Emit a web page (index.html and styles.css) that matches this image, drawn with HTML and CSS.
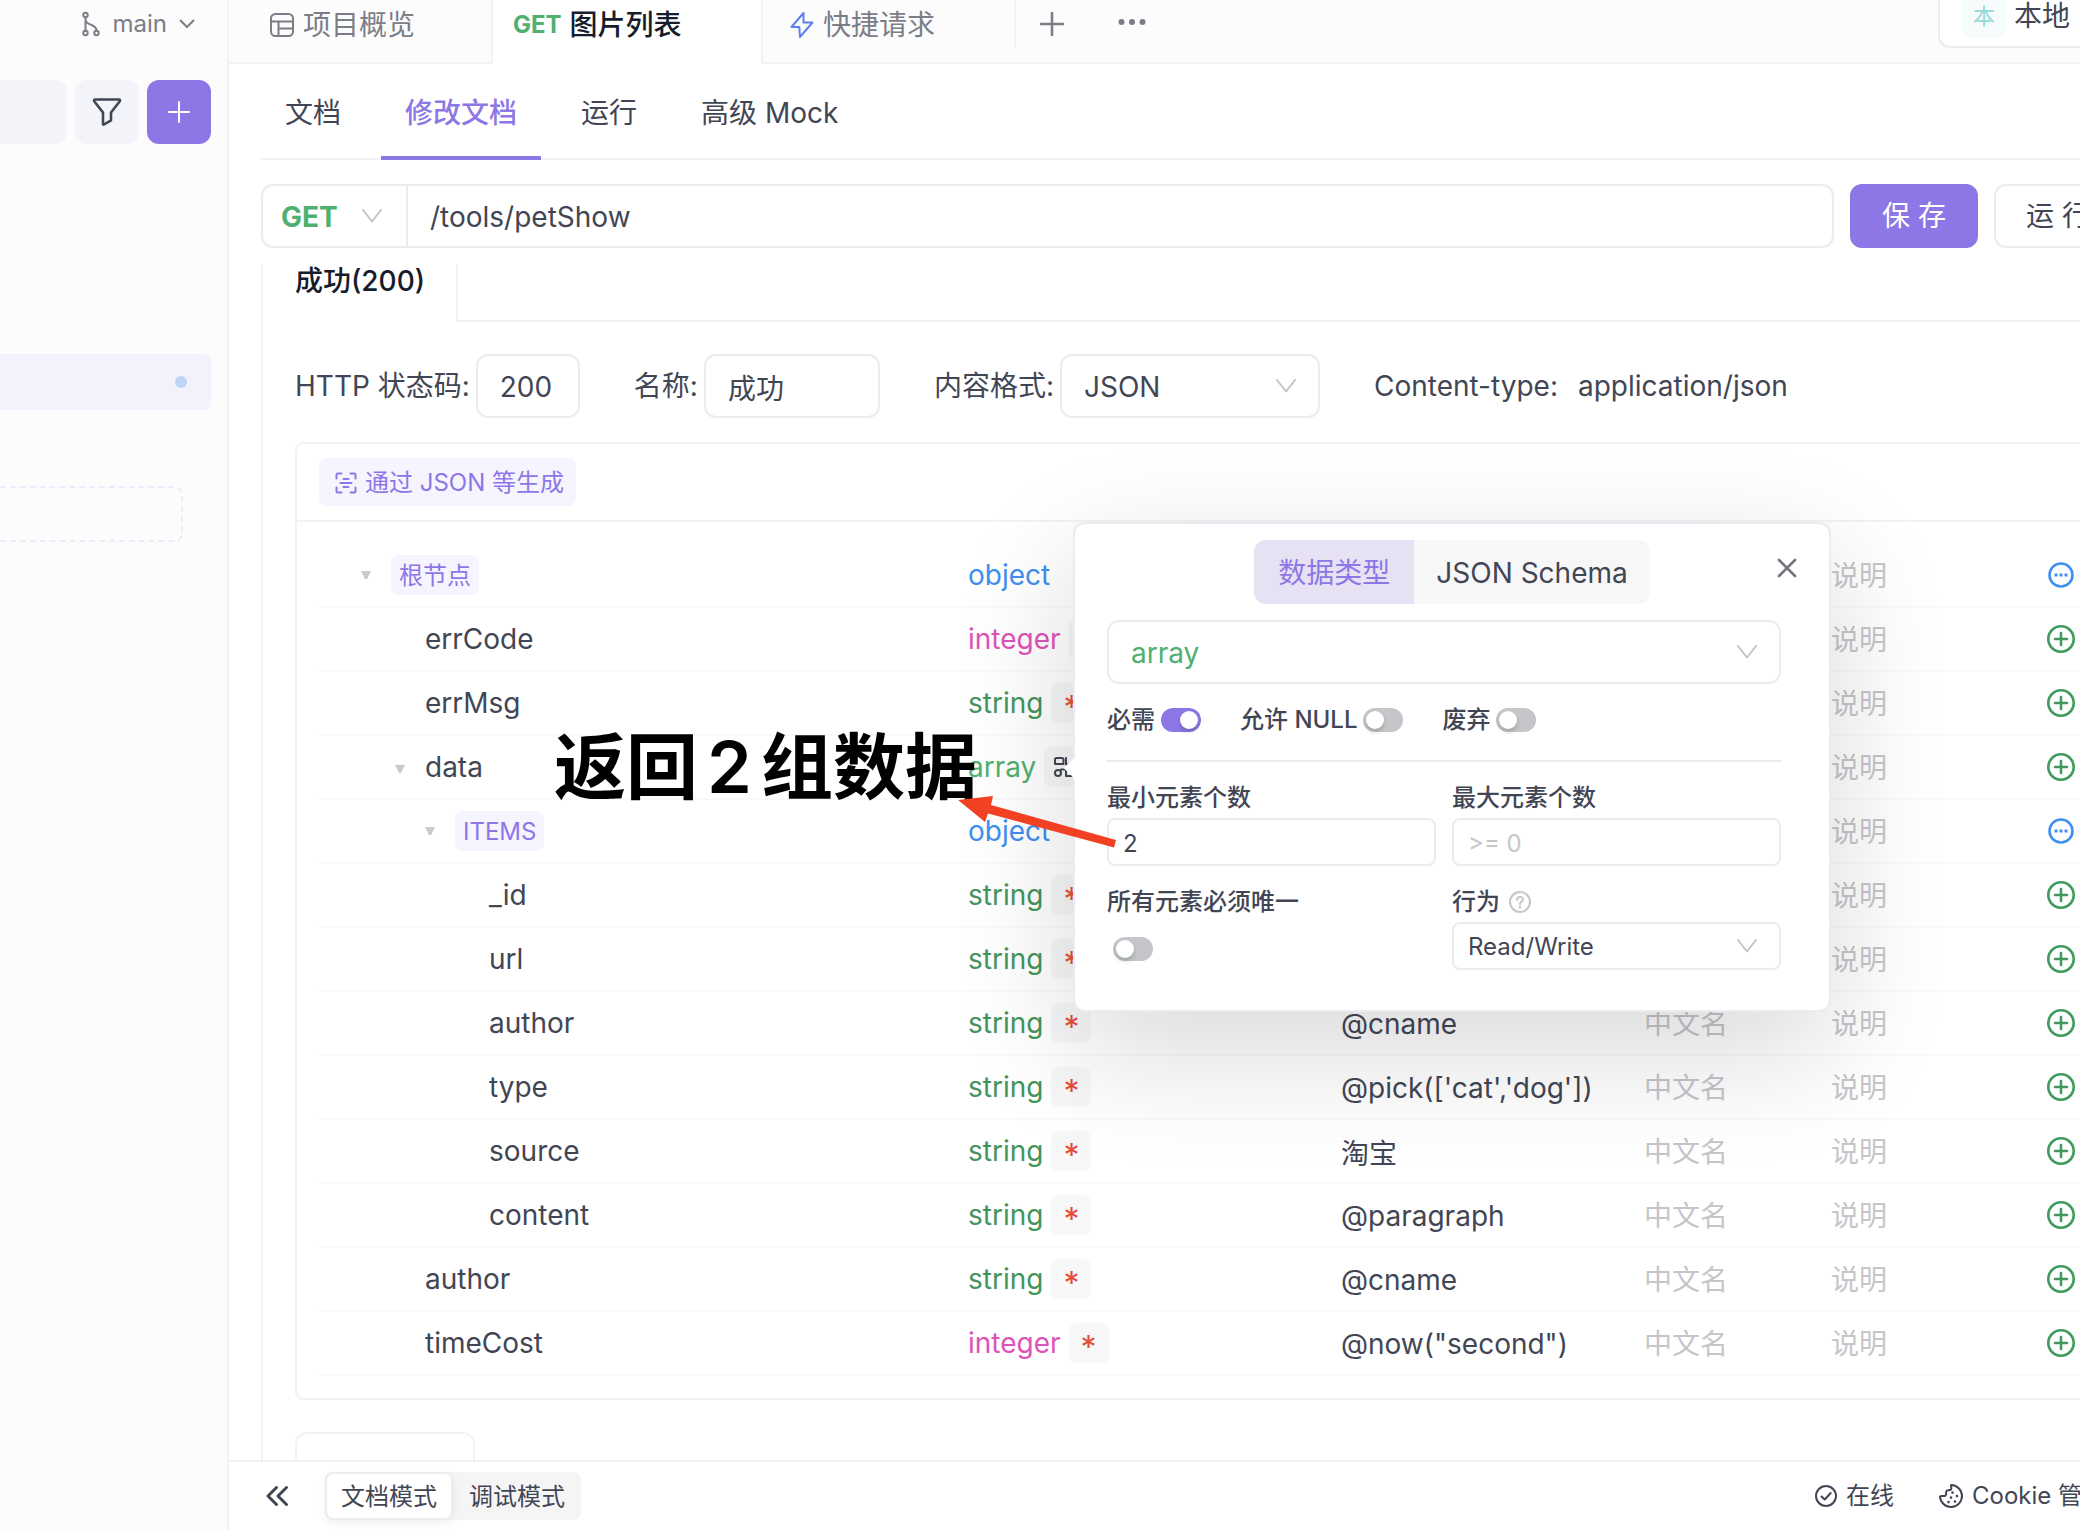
FILE: index.html
```html
<!DOCTYPE html>
<html lang="zh-CN">
<head>
<meta charset="utf-8">
<title>图片列表</title>
<link rel="stylesheet" href="styles.css">
</head>
<body>
<svg class="sprite" aria-hidden="true">
  <symbol id="chevron" viewBox="0 0 20 14"><path d="M1 1l9 11.500 9-11.500"/></symbol>
  <symbol id="add" viewBox="0 0 28 28"><circle cx="14" cy="14" r="12.700"/><path d="M14 8v12M8 14h12"/></symbol>
  <symbol id="more" viewBox="0 0 28 28"><circle cx="14" cy="14" r="11.500"/><path d="M7.500 14h3M12.500 14h3M17.500 14h3" stroke-width="3.200"/></symbol>
  <symbol id="caret" viewBox="0 0 10 10"><path d="M0 1h10L6 9H4z"/></symbol>
</svg>

<aside class="sidebar">
  <button class="branch" type="button">
    <svg class="line" width="20" height="26" viewBox="0 0 20 26"><circle cx="4.500" cy="4" r="2.200"/><circle cx="4.500" cy="22" r="2.200"/><circle cx="15.500" cy="22" r="2.200"/><path d="M4.500 6.500v13M4.500 9.500c1 3 3 3.200 6 4.500 3.500 1.500 5 2.500 5 5.500"/></svg>
    <span>main</span>
    <svg class="line" width="16" height="10" viewBox="0 0 16 10"><path d="M1.500 1.500L8 8l6.500-6.500"/></svg>
  </button>
  <div class="side-tools">
    <input class="side-search" type="text" aria-label="搜索">
    <button class="square" type="button" aria-label="筛选"><svg class="line" width="32" height="32" viewBox="0 0 32 32"><path stroke-width="2.600" d="M3 4.500c0-.6.400-1 1-1h24c.9 0 1.300 1 .8 1.700L20 16.500v7.800L13 28.500c-.5.300-1 0-1-.5V16.500L3.200 5.200z"/></svg></button>
    <button class="square square-primary" type="button" aria-label="新建"><svg class="line" width="24" height="24" viewBox="0 0 24 24"><path d="M12 2v20M2 12h20"/></svg></button>
  </div>
  <div class="side-item"><span class="dot"></span></div>
  <div class="side-drop"></div>
</aside>

<main class="main">
  <header class="tabs">
    <button class="tab tab-overview" type="button">
      <svg class="line" width="26" height="26" viewBox="0 0 26 26"><rect x="2" y="2" width="22" height="22" rx="4.500"/><path d="M2 9.500h22M9.500 9.500V24M9.500 16.500H24" stroke-width="2"/></svg>
      <span>项目概览</span>
    </button>
    <button class="tab tab-active" type="button"><b class="tab-method">GET</b><span>图片列表</span></button>
    <button class="tab tab-quick" type="button">
      <svg class="line bolt" width="26" height="28" viewBox="0 0 26 28"><path d="M14.500 2L2.500 16h7.800L11 26 23.500 11.500h-9z"/></svg>
      <span>快捷请求</span>
    </button>
    <div class="tab-rest">
      <button class="bare" type="button" aria-label="新标签"><svg class="line" width="24" height="24" viewBox="0 0 24 24"><path d="M12 1v22M1 12h22" stroke-width="2.600"/></svg></button>
      <button class="bare" type="button" aria-label="更多"><svg width="28" height="10" viewBox="0 0 28 10"><circle cx="3.500" cy="3" r="3"/><circle cx="14" cy="3" r="3"/><circle cx="24.500" cy="3" r="3"/></svg></button>
      <button class="env" type="button"><span class="env-badge">本</span><span>本地 Mock</span></button>
    </div>
  </header>

  <nav class="subtabs">
    <a href="#doc">文档</a>
    <a href="#edit" class="current">修改文档</a>
    <a href="#run">运行</a>
    <a href="#mock">高级 Mock</a>
  </nav>

  <div class="request">
    <div class="url">
      <div class="pick pick-method">
        <select aria-label="请求方法"><option>GET</option></select>
        <svg class="chev" width="20" height="14"><use href="#chevron"/></svg>
      </div>
      <input type="text" value="/tools/petShow" aria-label="路径">
    </div>
    <button class="btn btn-primary" type="button">保 存</button>
    <button class="btn btn-run" type="button">运 行</button>
  </div>

  <section class="response">
    <div class="status-tabs"><button class="status-tab" type="button">成功(200)</button><span class="status-rest"></span></div>
    <div class="pane">
      <div class="meta">
        <div class="field"><label for="code">HTTP 状态码:</label><input id="code" class="box box-code" type="text" value="200"></div>
        <div class="field"><label for="name">名称:</label><input id="name" class="box box-name" type="text" value="成功"></div>
        <div class="field"><label for="format">内容格式:</label>
          <div class="pick pick-format"><select id="format" class="box"><option>JSON</option></select><svg class="chev" width="20" height="14"><use href="#chevron"/></svg></div>
        </div>
        <div class="ctype"><span>Content-type:</span><span>application/json</span></div>
      </div>

      <div class="card">
        <div class="card-bar">
          <button class="generate" type="button">
            <svg class="line" width="22" height="22" viewBox="0 0 22 22"><path d="M1.500 6.500V3c0-1 .5-1.500 1.500-1.500h3.500M15.500 1.500H19c1 0 1.500.5 1.500 1.500v3.500M20.500 15.500V19c0 1-.5 1.500-1.500 1.500h-3.500M6.500 20.500H3c-1 0-1.500-.5-1.500-1.500v-3.500M8.500 7h5M5.500 11h11M8.500 15h5"/></svg>
            <span>通过 JSON 等生成</span>
          </button>
        </div>
        <table class="schema">
          <colgroup><col><col class="c-type"><col class="c-mock"><col class="c-cn"><col class="c-desc"><col class="c-act"></colgroup>
          <tbody>
            <tr><td class="d0"><button class="caret" type="button" aria-label="折叠"><svg width="10" height="10"><use href="#caret"/></svg></button><span class="chip">根节点</span></td><td><div class="type t-object">object</div></td><td></td><td></td><td><input placeholder="说明" aria-label="说明"></td><td><button class="bare act-more" type="button" aria-label="更多"><svg width="28" height="28"><use href="#more"/></svg></button></td></tr>
            <tr><td class="d1">errCode</td><td><div class="type t-integer">integer<span class="flag">*</span></div></td><td></td><td></td><td><input placeholder="说明" aria-label="说明"></td><td><button class="bare act-add" type="button" aria-label="添加"><svg width="28" height="28"><use href="#add"/></svg></button></td></tr>
            <tr><td class="d1">errMsg</td><td><div class="type t-string">string<span class="flag">*</span></div></td><td></td><td></td><td><input placeholder="说明" aria-label="说明"></td><td><button class="bare act-add" type="button" aria-label="添加"><svg width="28" height="28"><use href="#add"/></svg></button></td></tr>
            <tr><td class="d1"><button class="caret" type="button" aria-label="折叠"><svg width="10" height="10"><use href="#caret"/></svg></button>data</td><td><div class="type t-array">array<span class="flag flag-icon"><svg class="line" width="22" height="22" viewBox="0 0 22 22"><path d="M2 8V3.500C2 2.500 2.500 2 3.500 2H9c1 0 1.500.5 1.500 1.500V8H2M13 2v6.500h6"/><circle cx="5" cy="17" r="3"/><path d="M8 13.500h5V20h6"/></svg></span></div></td><td></td><td></td><td><input placeholder="说明" aria-label="说明"></td><td><button class="bare act-add" type="button" aria-label="添加"><svg width="28" height="28"><use href="#add"/></svg></button></td></tr>
            <tr><td class="d2"><button class="caret" type="button" aria-label="折叠"><svg width="10" height="10"><use href="#caret"/></svg></button><span class="chip">ITEMS</span></td><td><div class="type t-object">object</div></td><td></td><td></td><td><input placeholder="说明" aria-label="说明"></td><td><button class="bare act-more" type="button" aria-label="更多"><svg width="28" height="28"><use href="#more"/></svg></button></td></tr>
            <tr><td class="d3">_id</td><td><div class="type t-string">string<span class="flag">*</span></div></td><td></td><td></td><td><input placeholder="说明" aria-label="说明"></td><td><button class="bare act-add" type="button" aria-label="添加"><svg width="28" height="28"><use href="#add"/></svg></button></td></tr>
            <tr><td class="d3">url</td><td><div class="type t-string">string<span class="flag">*</span></div></td><td></td><td></td><td><input placeholder="说明" aria-label="说明"></td><td><button class="bare act-add" type="button" aria-label="添加"><svg width="28" height="28"><use href="#add"/></svg></button></td></tr>
            <tr><td class="d3">author</td><td><div class="type t-string">string<span class="flag">*</span></div></td><td><input value="@cname" aria-label="Mock"></td><td><input placeholder="中文名" aria-label="中文名"></td><td><input placeholder="说明" aria-label="说明"></td><td><button class="bare act-add" type="button" aria-label="添加"><svg width="28" height="28"><use href="#add"/></svg></button></td></tr>
            <tr><td class="d3">type</td><td><div class="type t-string">string<span class="flag">*</span></div></td><td><input value="@pick(['cat','dog'])" aria-label="Mock"></td><td><input placeholder="中文名" aria-label="中文名"></td><td><input placeholder="说明" aria-label="说明"></td><td><button class="bare act-add" type="button" aria-label="添加"><svg width="28" height="28"><use href="#add"/></svg></button></td></tr>
            <tr><td class="d3">source</td><td><div class="type t-string">string<span class="flag">*</span></div></td><td><input value="淘宝" aria-label="Mock"></td><td><input placeholder="中文名" aria-label="中文名"></td><td><input placeholder="说明" aria-label="说明"></td><td><button class="bare act-add" type="button" aria-label="添加"><svg width="28" height="28"><use href="#add"/></svg></button></td></tr>
            <tr><td class="d3">content</td><td><div class="type t-string">string<span class="flag">*</span></div></td><td><input value="@paragraph" aria-label="Mock"></td><td><input placeholder="中文名" aria-label="中文名"></td><td><input placeholder="说明" aria-label="说明"></td><td><button class="bare act-add" type="button" aria-label="添加"><svg width="28" height="28"><use href="#add"/></svg></button></td></tr>
            <tr><td class="d1">author</td><td><div class="type t-string">string<span class="flag">*</span></div></td><td><input value="@cname" aria-label="Mock"></td><td><input placeholder="中文名" aria-label="中文名"></td><td><input placeholder="说明" aria-label="说明"></td><td><button class="bare act-add" type="button" aria-label="添加"><svg width="28" height="28"><use href="#add"/></svg></button></td></tr>
            <tr><td class="d1">timeCost</td><td><div class="type t-integer">integer<span class="flag">*</span></div></td><td><input value='@now("second")' aria-label="Mock"></td><td><input placeholder="中文名" aria-label="中文名"></td><td><input placeholder="说明" aria-label="说明"></td><td><button class="bare act-add" type="button" aria-label="添加"><svg width="28" height="28"><use href="#add"/></svg></button></td></tr>
          </tbody>
        </table>
      </div>
      <div class="next-tab"></div>
    </div>
  </section>

  <footer class="footer">
    <button class="bare" type="button" aria-label="收起"><svg class="line" width="24" height="22" viewBox="0 0 24 22"><path d="M11.500 2.500L3 11l8.500 8.500M21.500 2.500L13 11l8.500 8.500" stroke-width="3"/></svg></button>
    <div class="mode"><button class="on" type="button">文档模式</button><button type="button">调试模式</button></div>
    <div class="foot-links">
      <a href="#online"><svg class="line" width="24" height="24" viewBox="0 0 24 24"><circle cx="12" cy="12" r="10"/><path d="M7.500 12.500l3.200 3 6-6.500"/></svg>在线</a>
      <a href="#cookie"><svg class="line" width="26" height="26" viewBox="0 0 26 26"><path d="M13 2c0 2.500 1 3.500 0 4.500-1.500 1.500-3.500 0-4.500 1.500S9 11 7.500 12.500 3 12 2 13.500A11 11 0 1 0 13 2z" stroke-linejoin="round"/><path d="M14.500 9.500v.1M19 13v.1M13 14.500v.1M10.500 19v.1M17 18.500v.1" stroke-width="2.600"/></svg>Cookie 管理</a>
    </div>
  </footer>

  <div class="popup" role="dialog" aria-label="数据类型">
    <button class="bare popup-close" type="button" aria-label="关闭"><svg class="line" width="20" height="20" viewBox="0 0 20 20"><path d="M2 2l16 16M18 2L2 18" stroke-width="2.600"/></svg></button>
    <div class="seg-row"><div class="seg"><button class="on" type="button">数据类型</button><button type="button">JSON Schema</button></div></div>
    <div class="pick pick-type"><select class="box" aria-label="类型"><option>array</option></select><svg class="chev" width="20" height="14"><use href="#chevron"/></svg></div>
    <div class="switches">
      <label>必需<input class="switch" type="checkbox" checked></label>
      <label>允许 NULL<input class="switch" type="checkbox"></label>
      <label>废弃<input class="switch" type="checkbox"></label>
    </div>
    <div class="limits">
      <div class="cell"><label for="min">最小元素个数</label><input id="min" class="box" type="text" value="2"></div>
      <div class="cell"><label for="max">最大元素个数</label><input id="max" class="box" type="text" placeholder="&gt;= 0"></div>
      <div class="cell"><label for="uniq">所有元素必须唯一</label><div class="uniq"><input id="uniq" class="switch" type="checkbox"></div></div>
      <div class="cell">
        <label for="behave">行为<svg class="line help" width="24" height="24" viewBox="0 0 24 24"><circle cx="12" cy="12" r="10"/><path d="M9 10c0-4 6-4 6-.5 0 2-3 2.300-3 4.500M12 16.500v1.200"/></svg></label>
        <div class="pick"><select id="behave" class="box"><option>Read/Write</option></select><svg class="chev" width="20" height="14"><use href="#chevron"/></svg></div>
      </div>
    </div>
  </div>

  <div class="note">返回<span class="note-num">2</span>组数据</div>
  <svg class="note-arrow" width="160" height="54" viewBox="0 0 160 54"><path d="M1 5l35-4-2 9 125 35-2 7.500L31 18.500 28 27z"/></svg>
</main>
</body>
</html>
```
FILE: styles.css
```css
* { box-sizing: border-box; }

body {
  margin: 0;
  height: 100vh;
  display: flex;
  overflow: hidden;
  background: #fff;
  color: #424654;
  font: 28px/32px Inter, "Noto Sans CJK SC", sans-serif;
}

button, input, select {
  margin: 0;
  padding: 0;
  border: 0;
  background: none;
  color: inherit;
  font: inherit;
  outline: 0;
}
button { white-space: nowrap; }
a { color: inherit; text-decoration: none; }
svg { display: block; flex: none; fill: currentColor; }
.line, .chev, .act-add svg, .act-more svg {
  fill: none;
  stroke: currentColor;
  stroke-width: 2;
  stroke-linecap: round;
  stroke-linejoin: round;
}
.sprite { position: absolute; width: 0; height: 0; }
.bare { display: flex; align-items: center; }
input::placeholder { color: #c5c6ca; opacity: 1; }

/* sidebar */
.sidebar {
  flex: none;
  width: 229px;
  border-right: 2px solid #f2f2f7;
  background: #fcfcfd;
}
.branch {
  display: flex;
  align-items: center;
  gap: 12px;
  margin-left: auto;
  padding-right: 32px;
  height: 48px;
  color: #7b7d87;
  font-size: 24px;
}
.side-tools { display: flex; gap: 8px; margin-top: 32px; padding-right: 16px; }
.side-search { flex: 1; min-width: 0; height: 64px; border-radius: 0 12px 12px 0; background: #f3f4f9; }
.square {
  flex: none;
  display: flex;
  align-items: center;
  justify-content: center;
  width: 64px;
  height: 64px;
  border-radius: 12px;
  background: #f3f4f9;
}
.square-primary { background: #8d77e6; color: #fff; }
.side-item {
  display: flex;
  align-items: center;
  justify-content: flex-end;
  height: 56px;
  margin: 210px 16px 76px 0;
  padding-right: 24px;
  border-radius: 0 8px 8px 0;
  background: #f3f1fc;
}
.dot { width: 12px; height: 12px; border-radius: 50%; background: #bfd4f7; }
.side-drop {
  height: 56px;
  margin-right: 44px;
  border: 2px dashed #ecebfa;
  border-left: 0;
  border-radius: 0 8px 8px 0;
}

/* main column */
.main {
  position: relative;
  flex: 1;
  min-width: 0;
  display: flex;
  flex-direction: column;
  overflow: hidden;
}
.tabs { flex: none; display: flex; height: 64px; background: #fcfcfd; color: #7b7d87; overflow: hidden; }
.tab {
  flex: none;
  display: flex;
  align-items: center;
  gap: 8px;
  padding: 0 20px 12px 40px;
  border-bottom: 2px solid #f2f2f7;
}
.tab-overview { width: 264px; border-right: 2px solid #f2f2f7; }
.tab-active {
  width: 270px;
  padding-left: 20px;
  padding-bottom: 14px;
  border-right: 2px solid #f2f2f7;
  border-bottom: 0;
  background: #fff;
  color: #171c2b;
  font-weight: 500;
}
.tab-method { color: #4fb06f; font-size: 24px; font-weight: 700; }
.tab-quick { width: 251px; padding-left: 26px; }
.bolt { color: #5d80ea; }
.tab-rest {
  flex: 1;
  min-width: 0;
  display: flex;
  align-items: center;
  gap: 54px;
  padding: 0 0 14px 26px;
  border-bottom: 2px solid #f2f2f7;
  background: linear-gradient(#f2f2f7, #f2f2f7) 0 0 / 2px 48px no-repeat;
}
.env {
  display: flex;
  align-items: center;
  align-self: flex-start;
  gap: 8px;
  flex: none;
  width: 240px;
  height: 64px;
  margin: -16px -98px 0 auto;
  padding: 0 22px;
  border: 2px solid #ebebf0;
  border-radius: 12px;
  background: #fff;
  color: #424654;
}
.env-badge {
  flex: none;
  width: 44px;
  height: 44px;
  border-radius: 8px;
  background: #f6fcfc;
  color: #92d9d9;
  font-size: 22px;
  line-height: 44px;
  text-align: center;
}

.subtabs {
  flex: none;
  display: flex;
  gap: 16px;
  height: 96px;
  margin-left: 32px;
  border-bottom: 2px solid #f2f2f7;
}
.subtabs a { height: 96px; padding: 0 24px; line-height: 98px; }
.subtabs .current { border-bottom: 4px solid #8d77e6; color: #8d77e6; font-weight: 500; }

.request { flex: none; display: flex; gap: 16px; margin: 24px 0 16px 32px; }
.url {
  flex: 1;
  min-width: 0;
  display: flex;
  height: 64px;
  border: 2px solid #ebebf0;
  border-radius: 12px;
}
.url input { flex: 1; min-width: 0; padding: 2px 22px 0; }
.pick { position: relative; }
.pick select { appearance: none; width: 100%; }
.chev {
  position: absolute;
  right: 24px;
  top: 50%;
  margin-top: -7px;
  color: #c3c4c8;
  pointer-events: none;
}
.pick-method { width: 145px; border-right: 2px solid #ebebf0; color: #4fb06f; font-weight: 700; }
.pick-method select { height: 60px; padding: 2px 0 0 18px; }
.btn { flex: none; width: 128px; height: 64px; border: 2px solid #ebebf0; border-radius: 12px; }
.btn-primary { border-color: #8d77e6; background: #8d77e6; color: #fff; }
.btn-run { margin-right: -42px; }

/* response editor */
.response {
  flex: 1;
  min-height: 0;
  margin-left: 32px;
  border-left: 2px solid #f2f2f7;
  overflow: hidden;
}
.status-tabs { display: flex; }
.status-tab {
  width: 195px;
  height: 58px;
  padding: 0 0 24px 32px;
  border-right: 2px solid #f2f2f7;
  color: #171c2b;
  font-weight: 500;
  text-align: left;
}
.status-rest { flex: 1; border-bottom: 2px solid #f2f2f7; }
.pane { padding: 32px 0 0 32px; }
.meta { display: flex; align-items: center; gap: 54px; white-space: nowrap; }
.field { display: flex; align-items: center; gap: 6px; }
.box {
  height: 64px;
  padding: 2px 22px 0;
  border: 2px solid #ebebf0;
  border-radius: 12px;
}
.box-code { width: 104px; }
.box-name { width: 176px; }
.pick-format { width: 260px; }
.ctype { display: flex; gap: 20px; }

.card {
  margin-top: 24px;
  border: 2px solid #f2f2f7;
  border-right: 0;
  border-radius: 8px 0 0 8px;
}
.card-bar { height: 78px; padding: 14px 22px; border-bottom: 2px solid #f2f2f7; }
.generate {
  display: flex;
  align-items: center;
  gap: 8px;
  height: 48px;
  padding: 2px 12px 0 16px;
  border-radius: 8px;
  background: #f6f4ff;
  color: #8d77e6;
  font-size: 24px;
}
.schema {
  width: calc(100% - 22px);
  margin: 22px 0 22px 22px;
  border-collapse: separate;
  border-spacing: 0;
  table-layout: fixed;
}
.c-type { width: 373px; }
.c-mock { width: 303px; }
.c-cn { width: 187px; }
.c-desc { width: 216px; }
.c-act { width: 33px; }
.schema td { height: 64px; padding: 0; border-bottom: 2px solid #f9f9fb; white-space: nowrap; }
.schema input { width: 100%; height: 40px; padding-top: 2px; }
.schema .d0 { padding-left: 72px; }
.schema .d1 { padding-left: 106px; }
.schema .d2 { padding-left: 136px; }
.schema .d3 { padding-left: 170px; }
.caret {
  display: inline-flex;
  justify-content: flex-start;
  width: 30px;
  margin-left: -30px;
  vertical-align: middle;
  color: #c9cacd;
}
.chip {
  display: inline-block;
  height: 40px;
  padding: 0 8px;
  border-radius: 8px;
  background: #f6f4ff;
  color: #8d77e6;
  font-size: 24px;
  line-height: 42px;
  vertical-align: middle;
}
.type { display: flex; align-items: center; gap: 8px; }
.flag {
  width: 40px;
  height: 40px;
  border-radius: 8px;
  background: #f7f7f8;
  color: #e2503c;
  font-size: 32px;
  line-height: 50px;
  text-align: center;
}
.flag-icon { padding: 9px; color: #424654; }
.t-object, .act-more { color: #3f8ff0; }
.t-integer { color: #de53b8; }
.t-string { color: #43945c; }
.t-array { color: #4fb06f; }
.act-add { color: #3f9a5c; }
.act-add svg, .act-more svg { stroke-width: 2.6px; }
.act-more svg { stroke-linecap: butt; }
.next-tab {
  width: 180px;
  height: 64px;
  margin-top: 32px;
  border: 2px solid #f2f2f7;
  border-radius: 12px 12px 0 0;
}

/* footer */
.footer {
  flex: none;
  display: flex;
  align-items: center;
  height: 70px;
  padding-left: 36px;
  border-top: 2px solid #f2f2f7;
  font-size: 24px;
}
.mode { display: flex; margin-left: 36px; border-radius: 8px; background: #f5f5f6; }
.mode button { width: 128px; height: 48px; padding-top: 2px; border: 2px solid transparent; border-radius: 8px; }
.mode .on { border-color: #ebebf0; background: #fff; box-shadow: 0 4px 8px rgba(40, 40, 80, .06); }
.foot-links { display: flex; flex: none; gap: 44px; margin: 0 -26px 0 auto; }
.foot-links a { display: flex; align-items: center; gap: 8px; white-space: nowrap; }

/* data type popup, floating over the table */
.popup {
  position: absolute;
  left: 844px;
  top: 522px;
  width: 758px;
  padding: 16px 48px 40px 32px;
  border: 2px solid #ebebf0;
  border-radius: 12px;
  background: #fff;
  box-shadow: 0 40px 120px rgba(17, 20, 24, .16);
  font-size: 24px;
}
.popup::before {
  content: "";
  position: absolute;
  left: -8px;
  top: 236px;
  width: 16px;
  height: 16px;
  background: #fff;
  transform: rotate(45deg);
}
.popup-close { position: absolute; right: 32px; top: 34px; color: #74767f; }
.seg-row { display: flex; justify-content: center; margin: 0 -16px 16px 0; }
.seg {
  display: flex;
  border-radius: 12px;
  background: #f7f7f8;
  overflow: hidden;
  font-size: 28px;
}
.seg button { height: 64px; padding: 2px 22px 0; }
.seg .on { background: #e6e2f4; color: #8d77e6; padding: 2px 24px 0; }
.pick-type { color: #4fb06f; font-size: 28px; }
.switches {
  display: flex;
  gap: 39px;
  padding: 20px 0 24px;
  border-bottom: 2px solid #ebebf0;
  font-weight: 500;
}
.switches label { display: flex; align-items: center; gap: 6px; }
.switch {
  appearance: none;
  flex: none;
  width: 40px;
  height: 24px;
  padding: 3px;
  border-radius: 12px;
  background: #c5c6ca;
}
.switch::before {
  content: "";
  display: block;
  width: 18px;
  height: 18px;
  border-radius: 50%;
  background: #fff;
  box-shadow: 0 3px 4px rgba(0, 35, 11, .2);
}
.switch:checked { background: #8d77e6; }
.switch:checked::before { margin-left: 16px; }
.limits { display: grid; grid-template-columns: 1fr 1fr; gap: 20px 16px; padding-top: 20px; }
.cell { display: flex; flex-direction: column; gap: 4px; }
.cell label { display: flex; align-items: center; gap: 8px; font-weight: 500; }
.cell .box { width: 100%; height: 48px; padding: 2px 14px 0; border-radius: 8px; }
.cell .pick { height: 48px; }
.help { color: #c5c6ca; }
.uniq { padding: 15px 6px 9px; line-height: 0; }

/* annotation laid over the editor */
.note {
  position: absolute;
  left: 325px;
  top: 723px;
  color: #000;
  font-size: 72px;
  font-weight: 600;
  line-height: 88px;
  white-space: nowrap;
}
.note-num { padding: 0 9px; }
.note-arrow { position: absolute; left: 728px; top: 795px; fill: #f24122; }
```
